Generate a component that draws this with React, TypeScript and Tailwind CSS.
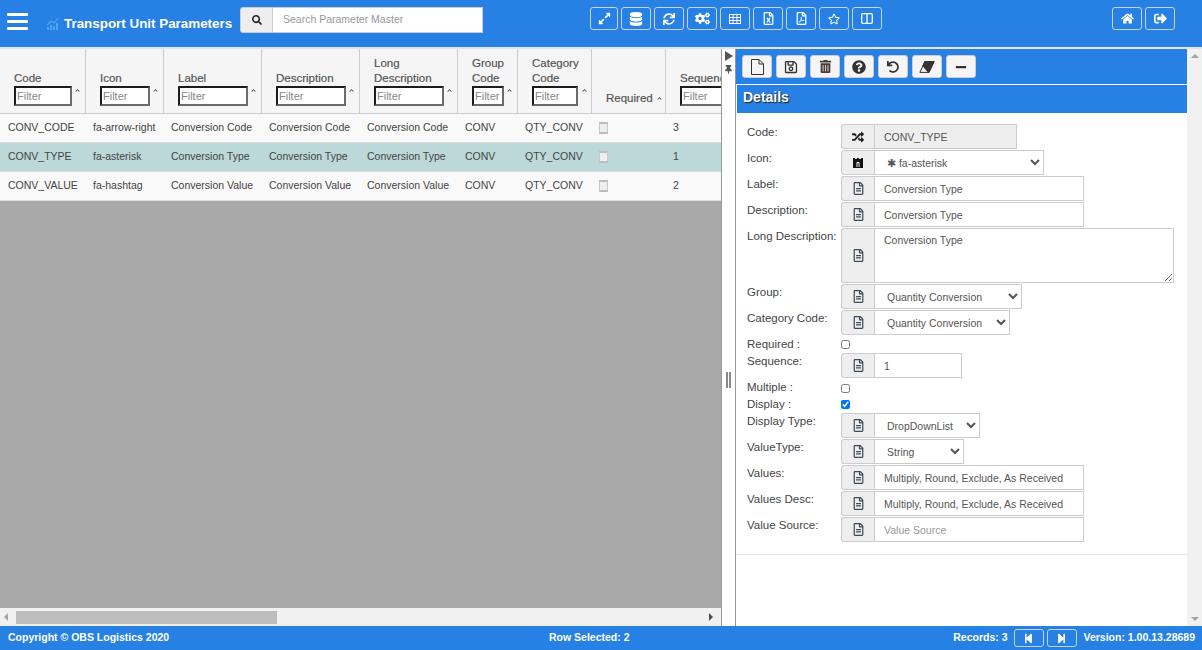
import type { ReactNode } from "react";
import {
  FaChevronUp,
  FaCogs,
  FaDatabase,
  FaHome,
  FaMinus,
  FaQuestionCircle,
  FaRandom,
  FaRegFileAlt,
  FaRegFileExcel,
  FaRegFilePdf,
  FaRegSave,
  FaRegStar,
  FaTrashAlt,
  FaSearch,
  FaStepBackward,
  FaStepForward,
  FaSync,
  FaThumbtack,
  FaUndo,
  FaExpandAlt,
  FaSignOutAlt,
} from "react-icons/fa";

const columns = [
  { title: ["Code"], cell: "w-[86px]", input: "w-[58px]" },
  { title: ["Icon"], cell: "w-[78px]", input: "w-[50px]" },
  { title: ["Label"], cell: "w-[98px]", input: "w-[70px]" },
  { title: ["Description"], cell: "w-[98px]", input: "w-[70px]" },
  { title: ["Long", "Description"], cell: "w-[98px]", input: "w-[70px]" },
  { title: ["Group", "Code"], cell: "w-[60px]", input: "w-[32px]" },
  { title: ["Category", "Code"], cell: "w-[74px]", input: "w-[46px]" },
];

const cellWidths = ["w-[85px]", "w-[78px]", "w-[98px]", "w-[98px]", "w-[98px]", "w-[60px]", "w-[74px]"];

const rows = [
  { values: ["CONV_CODE", "fa-arrow-right", "Conversion Code", "Conversion Code", "Conversion Code", "CONV", "QTY_CONV"], seq: "3", bg: "bg-[#f9f9f9]" },
  { values: ["CONV_TYPE", "fa-asterisk", "Conversion Type", "Conversion Type", "Conversion Type", "CONV", "QTY_CONV"], seq: "1", bg: "bg-[#bcd8d8]" },
  { values: ["CONV_VALUE", "fa-hashtag", "Conversion Value", "Conversion Value", "Conversion Value", "CONV", "QTY_CONV"], seq: "2", bg: "bg-[#f9f9f9]" },
];

function TableGlyph() {
  return (
    <svg width="12" height="10" viewBox="0 0 12 10" fill="none" stroke="currentColor" strokeWidth="1">
      <rect x="0.5" y="0.5" width="11" height="9" />
      <path d="M0 3.5H12M0 6.5H12M4 0V10M8 0V10" />
    </svg>
  );
}

function ColumnsGlyph() {
  return (
    <svg width="12" height="11" viewBox="0 0 12 11" fill="none" stroke="currentColor" strokeWidth="1.3">
      <rect x="0.7" y="0.7" width="10.6" height="9.6" rx="1" />
      <path d="M6 0.5V10.5" />
    </svg>
  );
}

function PageGlyph() {
  return (
    <svg width="13" height="16" viewBox="0 0 13 16" fill="none" stroke="currentColor" strokeWidth="1">
      <path d="M1 .5H8L12.5 5V15.5H.5V.5Z" />
      <path d="M8 .5V5H12.5" />
    </svg>
  );
}

function EraserGlyph() {
  return (
    <svg width="16" height="12" viewBox="0 0 16 12">
      <path d="M5.8 .6H15L10 11.4H.9Z" fill="none" stroke="#333" strokeWidth="1" />
      <path d="M5.5 0H15.8L10.4 11.6H9L3.4 5Z" fill="#333" />
    </svg>
  );
}

function FortGlyph() {
  return (
    <svg width="10" height="10" viewBox="0 0 10 10">
      <path d="M0 0H2V1H4V0H6V1H8V0H10V10H0Z" fill="#111" />
      <path d="M3.5 9V4.5Q5 3 6.5 4.5V9H5.6V5.2H4.4V9Z" fill="#fff" />
    </svg>
  );
}

const navIcons = [
  { icon: <FaExpandAlt size={13} />, w: "w-[28px]" },
  { icon: <FaDatabase size={14} />, w: "w-[30px]" },
  { icon: <FaSync size={12} />, w: "w-[30px]" },
  { icon: <FaCogs size={15} />, w: "w-[30px]" },
  { icon: <TableGlyph />, w: "w-[30px]" },
  { icon: <FaRegFileExcel size={13} />, w: "w-[30px]" },
  { icon: <FaRegFilePdf size={13} />, w: "w-[30px]" },
  { icon: <FaRegStar size={12} />, w: "w-[30px]" },
  { icon: <ColumnsGlyph />, w: "w-[30px]" },
];

const toolIcons = [
  <PageGlyph />,
  <FaRegSave size={14} />,
  <FaTrashAlt size={13} className="text-[#4a3f35]" />,
  <FaQuestionCircle size={14} />,
  <FaUndo size={12} />,
  <EraserGlyph />,
  <FaMinus size={12} />,
];

function NavButton({ children, className }: { children: ReactNode; className: string }) {
  return (
    <button className={"flex h-[23px] items-center justify-center rounded-[3px] border border-[#c4d4e6] text-white " + className}>
      {children}
    </button>
  );
}

function ChartMark() {
  return (
    <svg width="13" height="13" viewBox="0 0 13 13" className="text-[#4aa8f0]" fill="currentColor">
      <rect x="0" y="10" width="2" height="3" />
      <rect x="3" y="8" width="2" height="5" />
      <rect x="6" y="9" width="2" height="4" />
      <rect x="9" y="6" width="2" height="7" />
      <path d="M0 8 L4 4 L7 6 L11 1" fill="none" stroke="currentColor" strokeWidth="1.2" />
    </svg>
  );
}

function Addon({ icon }: { icon?: ReactNode }) {
  return (
    <span className="flex w-[33px] shrink-0 items-center justify-center rounded-l-[3px] border border-r-0 border-[#ccc] bg-[#eeeeee] text-[#3f4a5a]">
      {icon ?? <FaRegFileAlt size={13} />}
    </span>
  );
}

function FormRow({ label, children, className = "h-[26px]" }: { label: string; children?: ReactNode; className?: string }) {
  return (
    <div className={"flex " + className}>
      <span className="w-[94px] shrink-0 whitespace-nowrap pt-px leading-[15px]">{label}</span>
      {children}
    </div>
  );
}

function TextGroup({ value, width, placeholder, icon, disabled }: { value?: string; width: string; placeholder?: string; icon?: ReactNode; disabled?: boolean }) {
  return (
    <div className="flex h-[25px]">
      <Addon icon={icon} />
      <input
        readOnly
        defaultValue={value}
        placeholder={placeholder}
        className={"h-full border border-[#ccc] pl-[9px] text-[10.5px] text-[#555] outline-none placeholder:text-[#999] " + width + (disabled ? " bg-[#eeeeee]" : " bg-white")}
        disabled={disabled}
      />
    </div>
  );
}

function SelectGroup({ value, width, icon }: { value: string; width: string; icon?: ReactNode }) {
  return (
    <div className="flex h-[25px]">
      <Addon icon={icon} />
      <select defaultValue={value} className={"h-full border border-[#ccc] bg-white pl-2 text-[10.5px] text-[#555] outline-none " + width}>
        <option>{value}</option>
      </select>
    </div>
  );
}

function Check({ checked, className }: { checked?: boolean; className: string }) {
  return <input type="checkbox" readOnly checked={!!checked} className={"h-[9px] w-[9px] " + className} />;
}

function FilterInput({ width }: { width: string }) {
  return (
    <input
      readOnly
      placeholder="Filter"
      className={"h-[20px] border-2 border-t-[#1c1c1c] border-l-[#1c1c1c] border-r-[#6b6b6b] border-b-[#6b6b6b] bg-white px-px text-[11px] outline-none placeholder:text-[#888] " + width}
    />
  );
}

function HeaderCell({ title, cell, input }: { title: string[]; cell: string; input: string }) {
  return (
    <div className={"flex shrink-0 items-end border-r border-[#ccc] pb-[7px] pl-[14px] " + cell}>
      <div className="flex flex-col">
        {title.map((t) => (
          <span key={t} className="text-[11.5px] leading-[15px] text-[#555] [-webkit-text-stroke:0.2px_#555]">{t}</span>
        ))}
        <FilterInput width={input} />
      </div>
      <FaChevronUp size={5} className="mb-[13px] ml-[3px] shrink-0 text-[#444]" />
    </div>
  );
}

export default function App() {
  return (
    <div className="flex h-screen w-full flex-col overflow-hidden bg-white font-['Liberation_Sans',Arial,sans-serif] text-[10.5px] text-[#444]">
      <header className="flex h-[47px] shrink-0 items-start bg-[#2780e3]">
        <div className="ml-[7px] mt-[13px] flex w-[21px] flex-col gap-[4px]">
          <span className="h-[3px] rounded-[1px] bg-white" />
          <span className="h-[3px] rounded-[1px] bg-white" />
          <span className="h-[3px] rounded-[1px] bg-white" />
        </div>
        <span className="ml-[19px] mt-[17px]"><ChartMark /></span>
        <h1 className="ml-[4px] mt-[15px] w-[176px] whitespace-nowrap text-[13.4px] font-bold leading-[17px] text-white">Transport Unit Parameters</h1>
        <div className="mt-[7px] flex h-[26px] w-[243px]">
          <span className="flex w-[33px] items-center justify-center rounded-l-[3px] border border-[#ccc] bg-[#eeeeee] text-[#222]">
            <FaSearch size={10} />
          </span>
          <input readOnly placeholder="Search Parameter Master" className="w-[210px] border border-l-0 border-[#ccc] bg-white pl-[10px] text-[10.5px] outline-none placeholder:text-[#999]" />
        </div>
        <div className="ml-[107px] mt-[7px] flex gap-[3px]">
          {navIcons.map((n, i) => (
            <NavButton key={i} className={n.w}>{n.icon}</NavButton>
          ))}
        </div>
        <div className="ml-[230px] mt-[7px] flex gap-[3px]">
          <NavButton className="w-[30px]"><FaHome size={13} /></NavButton>
          <NavButton className="w-[30px]"><FaSignOutAlt size={13} /></NavButton>
        </div>
      </header>

      <main className="flex min-h-0 flex-1 border-t-2 border-[#e4e4e4]">
        <section className="flex w-[721px] shrink-0 flex-col overflow-hidden">
          <div className="flex h-[65px] shrink-0 border-b border-[#ccc] bg-[#f5f5f5]">
            {columns.map((c) => (
              <HeaderCell key={c.title.join(" ")} title={c.title} cell={c.cell} input={c.input} />
            ))}
            <div className="flex w-[74px] shrink-0 items-end border-r border-[#ccc] pb-[7px] pl-[14px]">
              <span className="text-[11.5px] leading-[15px] text-[#555] [-webkit-text-stroke:0.2px_#555]">Required</span>
              <FaChevronUp size={5} className="mb-[5px] ml-[4px] shrink-0 text-[#444]" />
            </div>
            <div className="flex w-[60px] shrink-0 flex-col justify-end pb-[7px] pl-[14px]">
              <span className="text-[11.5px] leading-[15px] text-[#555] [-webkit-text-stroke:0.2px_#555]">Sequence</span>
              <FilterInput width="w-[58px] shrink-0" />
            </div>
          </div>
          {rows.map((r) => (
            <div key={r.values[0]} className={"flex h-[29px] shrink-0 items-center border-b border-[#ddd] pb-px " + r.bg}>
              {r.values.map((v, i) => (
                <span key={i} className={"shrink-0 whitespace-nowrap pl-2 " + cellWidths[i]}>{v}</span>
              ))}
              <span className="w-[74px] shrink-0 pl-2">
                <span className="block h-[12px] w-[9px] border-y-2 border-x border-y-[#bdbdbd] border-x-[#c8c8c8] bg-[#eeeeee]" />
              </span>
              <span className="pl-2">{r.seq}</span>
            </div>
          ))}
          <div className="flex-1 bg-[#a9a9a9]" />
          <div className="flex h-[18px] shrink-0 items-center bg-[#f1f1f1]">
            <span className="ml-[4px] h-0 w-0 border-y-[4px] border-r-[4px] border-y-transparent border-r-[#a3a3a3]" />
            <span className="ml-[8px] h-[13px] w-[261px] bg-[#bdbdbd]" />
            <span className="ml-auto mr-[8px] h-0 w-0 border-y-[4px] border-l-[4px] border-y-transparent border-l-[#505050]" />
          </div>
        </section>

        <div className="flex w-[15px] shrink-0 flex-col items-center border-x border-x-[#999] text-[#555]">
          <span className="mt-[2px] h-0 w-0 border-y-[5px] border-l-[8px] border-y-transparent border-l-[#555]" />
          <FaThumbtack size={9} className="mt-[4px]" />
          <span className="mt-[298px] h-[16px] w-[5px] border-x-2 border-[#888]" />
        </div>

        <section className="flex min-w-0 flex-1 flex-col">
          <div className="mb-px flex h-[35px] shrink-0 items-start gap-[4px] bg-[#2780e3] pl-[6px] pt-[6px]">
            {toolIcons.map((icon, i) => (
              <button key={i} className="flex h-[23px] w-[30px] items-center justify-center rounded-[3px] border border-[#ccc] bg-[#f5f5f5] text-[#333]">
                {icon}
              </button>
            ))}
          </div>
          <div className="ml-px flex h-[28px] shrink-0 items-center bg-[#2780e3] pb-[3px] pl-[6px] text-[14px] font-bold text-white [text-shadow:1px_1px_1px_#222]">
            Details
          </div>
          <div className="flex flex-col border-b border-[#e8e8e8] pb-[11px] pl-[11px] pt-[11px] text-[11.5px]">
            <FormRow label="Code:"><TextGroup value="CONV_TYPE" width="w-[143px]" icon={<FaRandom size={12} className="text-[#222]" />} disabled /></FormRow>
            <FormRow label="Icon:"><SelectGroup value="✱ fa-asterisk" width="w-[170px]" icon={<FortGlyph />} /></FormRow>
            <FormRow label="Label:"><TextGroup value="Conversion Type" width="w-[210px]" /></FormRow>
            <FormRow label="Description:"><TextGroup value="Conversion Type" width="w-[210px]" /></FormRow>
            <FormRow label="Long Description:" className="h-[56px]">
              <div className="flex h-[55px]">
                <Addon />
                <textarea readOnly defaultValue="Conversion Type" className="h-full w-[300px] border border-[#ccc] bg-white pl-[9px] pt-[4px] text-[10.5px] text-[#555] outline-none" />
              </div>
            </FormRow>
            <FormRow label="Group:"><SelectGroup value="Quantity Conversion" width="w-[148px]" /></FormRow>
            <FormRow label="Category Code:"><SelectGroup value="Quantity Conversion" width="w-[136px]" /></FormRow>
            <FormRow label="Required :" className="h-[17px]"><Check className="mt-[4px]" /></FormRow>
            <FormRow label="Sequence:"><TextGroup value="1" width="w-[88px]" /></FormRow>
            <FormRow label="Multiple :" className="h-[17px]"><Check className="mt-[5px]" /></FormRow>
            <FormRow label="Display :" className="h-[17px]"><Check checked className="mt-[4px]" /></FormRow>
            <FormRow label="Display Type:"><SelectGroup value="DropDownList" width="w-[106px]" /></FormRow>
            <FormRow label="ValueType:"><SelectGroup value="String" width="w-[90px]" /></FormRow>
            <FormRow label="Values:"><TextGroup value="Multiply, Round, Exclude, As Received" width="w-[210px]" /></FormRow>
            <FormRow label="Values Desc:"><TextGroup value="Multiply, Round, Exclude, As Received" width="w-[210px]" /></FormRow>
            <FormRow label="Value Source:"><TextGroup placeholder="Value Source" width="w-[210px]" /></FormRow>
          </div>
        </section>

        <div className="flex w-[15px] shrink-0 flex-col items-center justify-between bg-[#f1f1f1] py-[5px]">
          <span className="h-0 w-0 border-x-[4px] border-b-[4px] border-x-transparent border-b-[#a3a3a3]" />
          <span className="h-0 w-0 border-x-[4px] border-t-[4px] border-x-transparent border-t-[#a3a3a3]" />
        </div>
      </main>

      <footer className="flex h-[24px] shrink-0 items-center bg-[#2780e3] text-[10.5px] font-bold text-white">
        <span className="w-[549px] pl-2">Copyright © OBS Logistics 2020</span>
        <span>Row Selected: 2</span>
        <div className="ml-auto flex items-center pr-[7px]">
          <span>Records: 3</span>
          <button className="ml-[6px] flex h-[18px] w-[30px] items-center justify-center rounded-[3px] border border-[#c4d4e6]"><FaStepBackward size={11} /></button>
          <button className="ml-[3px] flex h-[18px] w-[30px] items-center justify-center rounded-[3px] border border-[#c4d4e6]"><FaStepForward size={11} /></button>
          <span className="ml-[7px]">Version: 1.00.13.28689</span>
        </div>
      </footer>
    </div>
  );
}
